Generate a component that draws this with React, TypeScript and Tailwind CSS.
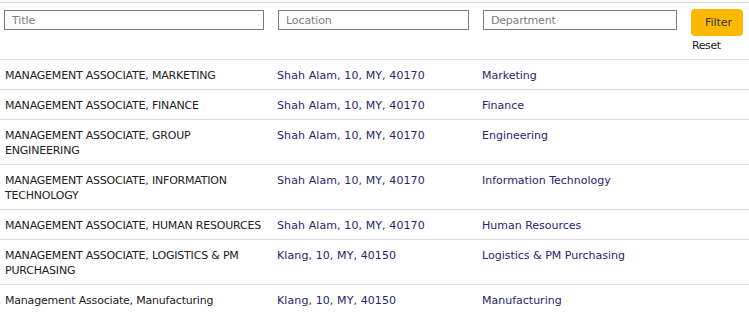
import React from "react";

const rows = [
  { t: "MANAGEMENT ASSOCIATE, MARKETING", l: "Shah Alam, 10, MY, 40170", d: "Marketing" },
  { t: "MANAGEMENT ASSOCIATE, FINANCE", l: "Shah Alam, 10, MY, 40170", d: "Finance" },
  { t: "MANAGEMENT ASSOCIATE, GROUP ENGINEERING", l: "Shah Alam, 10, MY, 40170", d: "Engineering" },
  { t: "MANAGEMENT ASSOCIATE, INFORMATION TECHNOLOGY", l: "Shah Alam, 10, MY, 40170", d: "Information Technology" },
  { t: "MANAGEMENT ASSOCIATE, HUMAN RESOURCES", l: "Shah Alam, 10, MY, 40170", d: "Human Resources" },
  { t: "MANAGEMENT ASSOCIATE, LOGISTICS & PM PURCHASING", l: "Klang, 10, MY, 40150", d: "Logistics & PM Purchasing" },
  { t: "Management Associate, Manufacturing", l: "Klang, 10, MY, 40150", d: "Manufacturing" },
];

export default function App() {
  return (
    <div
      className="w-[749px] h-[319px] overflow-hidden bg-white text-[11px] leading-[15px]"
      style={{ fontFamily: '"DejaVu Sans", Verdana, sans-serif' }}
    >
      <div className="mt-[2px] border-t border-[#dcdcdc]">
        <div className="grid grid-cols-[274px_205px_208px_1fr] h-[57px] border-b border-[#dcdcdc]">
          <div className="pl-[4px] pt-[7px]">
            <input
              placeholder="Title"
              className="w-[260px] h-[20px] border border-[#7a7a7a] px-[7px] text-[11px] tracking-[-0.1px] placeholder:text-[#7d7d7d] outline-none"
            />
          </div>
          <div className="pl-[4px] pt-[7px]">
            <input
              placeholder="Location"
              className="w-[191px] h-[20px] border border-[#7a7a7a] px-[7px] text-[11px] tracking-[-0.1px] placeholder:text-[#7d7d7d] outline-none"
            />
          </div>
          <div className="pl-[4px] pt-[7px]">
            <input
              placeholder="Department"
              className="w-[194px] h-[20px] border border-[#7a7a7a] px-[7px] text-[11px] tracking-[-0.2px] placeholder:text-[#7d7d7d] outline-none"
            />
          </div>
          <div className="pl-[4px] pt-[6px] flex flex-col items-start">
            <button className="w-[52px] h-[27px] rounded-[4px] bg-[#ffb800] text-[#333] text-[11px] pl-[3px]">
              Filter
            </button>
            <span className="mt-[2px] ml-[1px] text-[#222] tracking-[-0.4px]">Reset</span>
          </div>
        </div>
        {rows.map((r, i) => (
          <div
            key={i}
            className="grid grid-cols-[274px_205px_208px_1fr] border-b border-[#dcdcdc] last:border-b-0"
          >
            <div className="pl-[5px] pr-[10px] pt-[8px] pb-[6px] text-[#222] tracking-[-0.2px]">{r.t}</div>
            <div className="pl-[3px] pr-[4px] pt-[8px] pb-[6px] text-[#26266f] tracking-[0.1px]">{r.l}</div>
            <div className="pl-[3px] pr-[4px] pt-[8px] pb-[6px] text-[#26266f]">{r.d}</div>
            <div />
          </div>
        ))}
      </div>
    </div>
  );
}
